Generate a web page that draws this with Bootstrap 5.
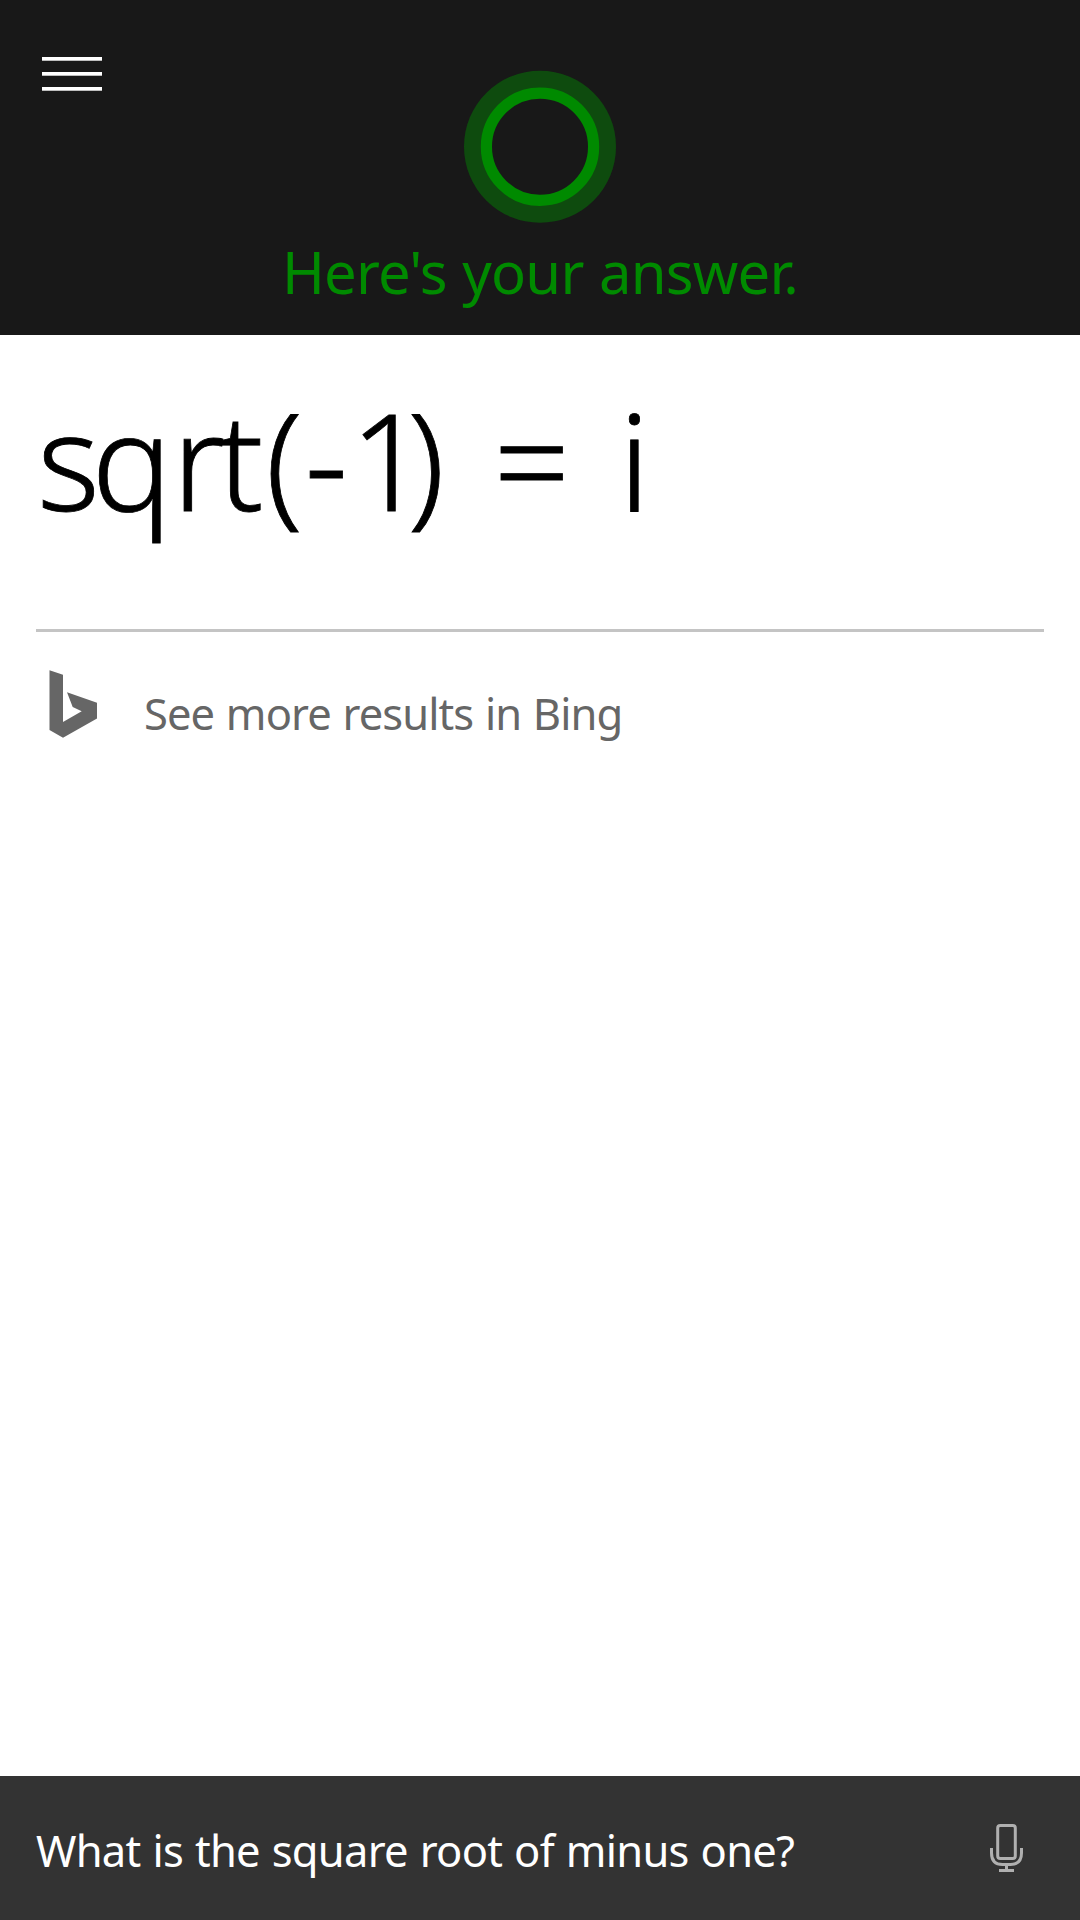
<!DOCTYPE html>
<html lang="en">
<head>
<meta charset="utf-8">
<meta name="viewport" content="width=device-width, initial-scale=1">
<title>Cortana</title>
<link href="https://cdn.jsdelivr.net/npm/bootstrap@5.3.0/dist/css/bootstrap.min.css" rel="stylesheet">
<style>
  body { font-family: "Noto Sans", "Open Sans", sans-serif; background: #fff; color: #000; }
  .screen { height: 1920px; }
  .assistant-header { height: 335px; background: #181818; color: #008a00; }
  .menu-btn { padding: 57px 0 0 42px; }
  .orb { margin-top: 70px; }
  .greeting { font-size: 58px; line-height: 70px; margin-top: 14px; letter-spacing: -.8px; word-spacing: 1.2px; white-space: nowrap; }
  .result { font-size: 134px; font-weight: 300; line-height: 160px; padding-top: 44px; margin-left: 1px; height: 294px; letter-spacing: 0; word-spacing: 14px; white-space: nowrap; -webkit-text-stroke: .8px #000; }
  .kern-s { letter-spacing: -8px; }
  .kern-r { letter-spacing: -7px; }
  .kern-paren { letter-spacing: 2px; }
  .kern-one { letter-spacing: -19px; }
  .answer-area { padding: 0 36px; }
  .bing-link { border-top: 3px solid #c4c4c4; padding: 37px 0 0 13px; color: #666; }
  .bing-link .link-text { font-size: 43.5px; line-height: 60px; letter-spacing: -.9px; word-spacing: 1.2px; margin: 14px 0 0 45px; white-space: nowrap; }
  .query-bar { height: 144px; background: #333; color: #fff; padding: 0 56px 0 36px; }
  .query-text { font-size: 43.5px; line-height: 60px; letter-spacing: -.75px; word-spacing: 1.4px; padding-top: 3px; white-space: nowrap; }
</style>
</head>
<body>
<div class="screen d-flex flex-column overflow-hidden">
  <header class="assistant-header flex-shrink-0">
    <div class="row g-0">
      <div class="col">
        <button class="menu-btn btn border-0 rounded-0 d-block lh-1" type="button" aria-label="Menu">
          <svg class="d-block" width="60" height="34" shape-rendering="crispEdges"><path fill="#fff" d="M0 0h60v3H0zM0 15h60v3H0zM0 30h60v3H0z"/><path fill="#bdbdbd" d="M0 3h60v1H0zM0 18h60v1H0zM0 33h60v1H0z"/></svg>
        </button>
      </div>
      <div class="col-auto">
        <svg class="orb d-block" width="154" height="153" viewBox="0 0 154 153">
          <circle cx="77" cy="76.7" r="76" fill="#0e4b0e"/>
          <circle cx="77" cy="76.7" r="53.6" fill="#181818" stroke="#008a00" stroke-width="11.2"/>
        </svg>
      </div>
      <div class="col"></div>
    </div>
    <p class="greeting text-center mb-0">Here's your answer.</p>
  </header>

  <main class="answer-area flex-grow-1">
    <h1 class="result mb-0"><span class="kern-s">s</span>q<span class="kern-r">r</span><span class="kern-paren">t(-</span><span class="kern-one">1</span>) = i</h1>
    <a class="bing-link d-flex align-items-start text-decoration-none" href="#">
      <svg class="flex-shrink-0" width="50" height="70" viewBox="49 669 50 70" fill="#666"><path d="M49.5 670.3 63 674.7V722L81.7 711.3 72.7 707 67 692.3 97 702.7V718.5L63 737.7 49.5 730z"/></svg>
      <span class="link-text">See more results in Bing</span>
    </a>
  </main>

  <footer class="query-bar d-flex align-items-center justify-content-between flex-shrink-0">
    <span class="query-text">What is the square root of minus one?</span>
    <svg class="flex-shrink-0" width="34" height="48" viewBox="990 1824 34 48" fill="none" stroke="#b0b0b0" stroke-width="3">
      <rect x="997.7" y="1825.5" width="17.6" height="33" rx="2.5"/>
      <path d="M991.5 1848v5q0 11.5 11 11.5h8q11 0 11-11.5v-5M1006.5 1864.5v6M999 1870.5h15"/>
    </svg>
  </footer>
</div>
<script src="https://cdn.jsdelivr.net/npm/bootstrap@5.3.0/dist/js/bootstrap.bundle.min.js"></script>
</body>
</html>
